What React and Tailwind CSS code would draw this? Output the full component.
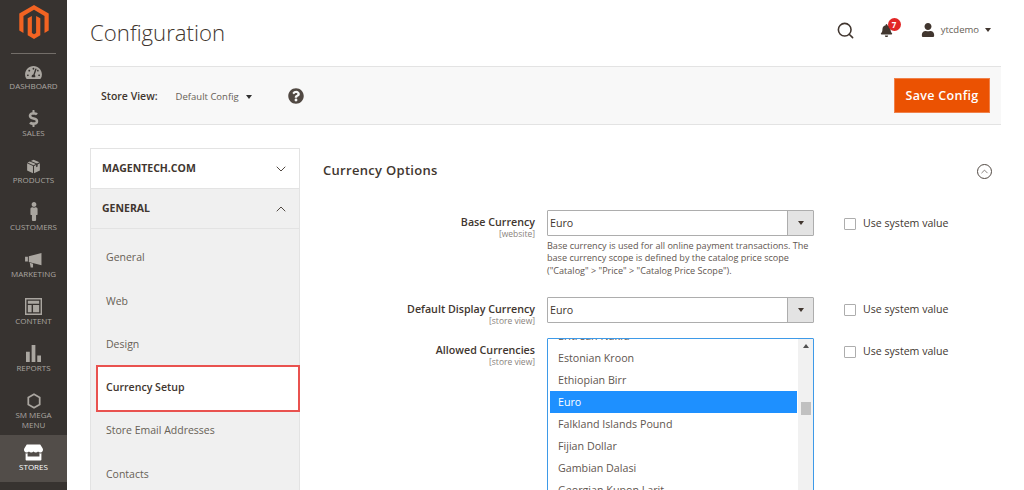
import { ChevronDown, ChevronUp, Search } from 'lucide-react'
import { FaBell, FaDollarSign, FaMale, FaQuestionCircle, FaStore, FaTachometerAlt, FaUser } from 'react-icons/fa'
import { SiMagento } from 'react-icons/si'

function BoxIcon() {
  return (
    <svg viewBox="0 0 20 20" className="w-[15px] h-[15px]" fill="currentColor">
      <path d="M10 1l8 3.4L14.600 6 6.500 2.500zM5 3.200l8.200 3.500L10 8.200 2 4.500zM1.500 5.800l7.800 3.600V19l-7.800-3.800zM18.500 5.800v9.400L10.700 19V9.400l2.800-1.300v3l2-1V7.200z" />
    </svg>
  )
}

function HornIcon() {
  return (
    <svg viewBox="0 0 18 16" className="w-[17px] h-[15px]" fill="currentColor">
      <path d="M0 4h3v5H0zM4 3.500L17.500 0v13L4 9.500zM5 10.500l3.500 1v4H6z" />
    </svg>
  )
}

function ContentIcon() {
  return (
    <svg viewBox="0 0 18 18" className="w-[17px] h-[17px]" fill="currentColor">
      <path fillRule="evenodd" d="M0 0h18v18H0zM1.500 1.500v15h15v-15zM3 3h12v3H3zM3 7.500h4V15H3zM8.500 7.500H15V15H8.500z" />
    </svg>
  )
}

function BarsIcon() {
  return (
    <svg viewBox="0 0 16 18" className="w-[15px] h-[17px]" fill="currentColor">
      <path d="M0 7h4v11H0zM6 0h4v18H6zM12 11h4v7h-4z" />
    </svg>
  )
}

function HexIcon() {
  return (
    <svg viewBox="0 0 16 18" className="w-[14px] h-[16px]" fill="none" stroke="currentColor" strokeWidth="2">
      <path d="M8 1.200l6.500 3.700v8.200L8 16.800l-6.500-3.700V4.900z" />
    </svg>
  )
}

const MENU = [
  { label: 'Dashboard', icon: <FaTachometerAlt className="w-[17px] h-[15px]" /> },
  { label: 'Sales', icon: <FaDollarSign className="w-[13px] h-[17px]" /> },
  { label: 'Products', icon: <BoxIcon /> },
  { label: 'Customers', icon: <FaMale className="w-[18px] h-[19px]" /> },
  { label: 'Marketing', icon: <HornIcon /> },
  { label: 'Content', icon: <ContentIcon /> },
  { label: 'Reports', icon: <BarsIcon /> },
  { label: 'SM Mega Menu', icon: <HexIcon />, tall: true },
  { label: 'Stores', icon: <FaStore className="w-[19px] h-[17px]" />, active: true },
]

const SUBMENU = ['General', 'Web', 'Design', 'Currency Setup', 'Store Email Addresses', 'Contacts']

const CURRENCIES = [
  'Eritrean Nakfa',
  'Estonian Kroon',
  'Ethiopian Birr',
  'Euro',
  'Falkland Islands Pound',
  'Fijian Dollar',
  'Gambian Dalasi',
  'Georgian Kupon Larit',
]

function Sidebar() {
  return (
    <aside className="w-[67px] shrink-0 bg-[#373330] flex flex-col">
      <div className="h-[54px] flex flex-col items-center">
        <SiMagento className="w-[34px] h-[34px] mt-[5px] text-[#f26322]" />
        <div className="mt-auto w-[45px] h-px bg-[#736e69]" />
      </div>
      {MENU.map((item) => (
        <div
          key={item.label}
          className={`flex flex-col items-center ${item.tall ? 'h-[52px]' : 'h-[47px]'} ${
            item.active ? 'bg-[#524d49] text-white' : 'text-[#aaa6a0]'
          }`}
        >
          <div className="h-[26px] flex items-end justify-center">{item.icon}</div>
          <div className="mt-[1px] text-[8px] leading-[10px] uppercase text-center w-[56px]">{item.label}</div>
        </div>
      ))}
    </aside>
  )
}

function TopBar() {
  return (
    <header className="h-[66px] flex items-center justify-between pl-[23px] pr-[33px]">
      <h1 className="text-[22.200px] font-light text-[#41362f] leading-none">Configuration</h1>
      <div className="flex items-center text-[#41362f] -mt-[6px]">
        <Search className="w-[19px] h-[19px]" strokeWidth={2} />
        <div className="relative ml-[25px]">
          <FaBell className="w-[13px] h-[13px]" />
          <span className="absolute -top-[6px] left-[8px] w-[13px] h-[13px] rounded-full bg-[#e22626] text-white text-[8px] font-bold leading-[13px] text-center">
            7
          </span>
        </div>
        <FaUser className="ml-[28px] w-[14px] h-[14px]" />
        <span className="ml-[6px] text-[9.500px] text-[#676056]">ytcdemo</span>
        <span className="ml-[6px] w-0 h-0 border-x-[3px] border-x-transparent border-t-[4px] border-t-[#41362f]" />
      </div>
    </header>
  )
}

function ActionBar() {
  return (
    <div className="mx-[23px] h-[59px] bg-[#f8f8f8] border-y border-[#e3e3e3] flex items-center pl-[11px] pr-[11px]">
      <span className="mt-[3px] text-[10.500px] font-semibold text-[#41362f]">Store View:</span>
      <span className="mt-[3px] ml-[18px] text-[9.500px] text-[#676056]">Default Config</span>
      <span className="mt-[3px] ml-[7px] w-0 h-0 border-x-[3px] border-x-transparent border-t-[4px] border-t-[#303030]" />
      <FaQuestionCircle className="ml-[36px] w-[16px] h-[16px] text-[#514943]" />
      <button className="ml-auto w-[96px] h-[35px] bg-[#eb5202] border border-[#f0814a] text-white text-[12.500px] font-semibold tracking-[0.3px] pt-[1px]">
        Save Config
      </button>
    </div>
  )
}

function ConfigNav() {
  return (
    <nav className="w-[210px] shrink-0 border-x border-t border-[#e3e3e3]">
      <div className="h-[39px] flex items-center justify-between pl-[11px] pr-[10px] text-[10.500px] font-bold text-[#41362f]">
        MAGENTECH.COM
        <ChevronDown className="w-[16px] h-[16px] text-[#514943]" strokeWidth={1.5} />
      </div>
      <div className="h-[41px] flex items-center justify-between pl-[11px] pr-[10px] bg-[#f0f0f0] border-y border-[#e3e3e3] text-[10.500px] font-bold text-[#41362f]">
        GENERAL
        <ChevronUp className="w-[16px] h-[16px] text-[#514943]" strokeWidth={1.5} />
      </div>
      <ul className="bg-[#f0f0f0] pt-[7.500px] pb-[20px]">
        {SUBMENU.map((name) =>
          name === 'Currency Setup' ? (
            <li
              key={name}
              className="ml-[5px] -mr-px h-[47px] -my-[2px] relative flex items-center pl-[8px] bg-white border-2 border-[#e9524f] text-[10.600px] font-semibold text-[#41362f]"
            >
              {name}
            </li>
          ) : (
            <li key={name} className="h-[43.400px] flex items-center pl-[15px] text-[10.500px] text-[#676056]">
              {name}
            </li>
          ),
        )}
      </ul>
    </nav>
  )
}

function FieldLabel({ label, scope }) {
  return (
    <div className="w-[212px] shrink-0 text-right pt-[5px]">
      <div className="text-[10.700px] leading-[15px] font-semibold text-[#41362f] whitespace-nowrap">{label}</div>
      <div className="text-[8.500px] leading-[8px] text-[#8a837d]">{scope}</div>
    </div>
  )
}

function SystemValue({ className = 'mt-[7px]' }) {
  return (
    <label className={`ml-[30px] flex items-center h-[12px] text-[10.600px] text-[#41362f] whitespace-nowrap ${className}`}>
      <span className="w-[12px] h-[12px] bg-white border border-[#adadad] rounded-[1px]" />
      <span className="ml-[7px]">Use system value</span>
    </label>
  )
}

function SelectBox({ value }) {
  return (
    <div className="h-[26px] flex border border-[#adadad] rounded-[1px] bg-white">
      <span className="flex-1 pl-[2px] text-[10.700px] leading-[24px] text-[#41362f]">{value}</span>
      <span className="w-[26px] bg-[#e3e3e3] border-l border-[#adadad] flex items-center justify-center">
        <span className="w-0 h-0 border-x-[3px] border-x-transparent border-t-[4px] border-t-[#41362f]" />
      </span>
    </div>
  )
}

function CurrencyList() {
  return (
    <div className="h-[170px] flex border border-[#3e9ae8] rounded-[1px] bg-white overflow-hidden">
      <div className="flex-1 pl-[2px] pr-[1px] min-w-0">
        <div className="-mt-[14px]">
          {CURRENCIES.map((name) => (
            <div
              key={name}
              className={`h-[22px] pl-[8px] text-[10.700px] leading-[22px] ${
                name === 'Euro' ? 'bg-[#1e90ff] text-white' : 'text-[#5f5650]'
              }`}
            >
              {name}
            </div>
          ))}
        </div>
      </div>
      <div className="w-[15px] bg-[#f1f1f1] flex flex-col items-center pt-[5px]">
        <span className="w-0 h-0 border-x-[3px] border-x-transparent border-b-[4px] border-b-[#505050]" />
        <span className="mt-[54px] w-[10px] h-[13px] bg-[#c1c1c1]" />
      </div>
    </div>
  )
}

function ConfigForm() {
  return (
    <section className="flex-1 min-w-0 pl-[23px]">
      <div className="h-[62px] flex items-center justify-between pr-[10px]">
        <h2 className="text-[13px] font-semibold tracking-[0.3px] text-[#41362f] -mt-[16px]">Currency Options</h2>
        <span className="-mt-[16px] w-[15px] h-[15px] rounded-full border border-[#514943] flex items-center justify-center">
          <ChevronUp className="w-[11px] h-[11px] text-[#514943]" strokeWidth={1.5} />
        </span>
      </div>

      <div className="flex">
        <FieldLabel label="Base Currency" scope="[website]" />
        <div className="ml-[12px] w-[267px] shrink-0">
          <SelectBox value="Euro" />
          <p className="mt-[4px] text-[9.080px] leading-[12.400px] text-[#5f5650]">
            Base currency is used for all online payment transactions. The base currency scope is defined by the catalog
            price scope ("Catalog" &gt; "Price" &gt; "Catalog Price Scope").
          </p>
        </div>
        <SystemValue className="mt-[8px]" />
      </div>

      <div className="flex mt-[20px]">
        <FieldLabel label="Default Display Currency" scope="[store view]" />
        <div className="ml-[12px] w-[267px] shrink-0">
          <SelectBox value="Euro" />
        </div>
        <SystemValue />
      </div>

      <div className="flex mt-[13px]">
        <FieldLabel label="Allowed Currencies" scope="[store view]" />
        <div className="ml-[12px] w-[267px] shrink-0">
          <CurrencyList />
        </div>
        <SystemValue className="mt-[8px]" />
      </div>
    </section>
  )
}

export default function App() {
  return (
    <div className="h-[490px] w-[1024px] overflow-hidden flex bg-white font-['Open_Sans',sans-serif]">
      <Sidebar />
      <main className="flex-1 min-w-0">
        <TopBar />
        <ActionBar />
        <div className="flex pl-[23px] pr-[22px] mt-[23px]">
          <ConfigNav />
          <ConfigForm />
        </div>
      </main>
    </div>
  )
}
